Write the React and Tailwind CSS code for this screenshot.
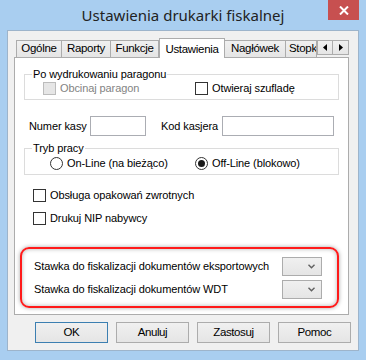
import React from "react";

const font = { fontFamily: '"Liberation Sans", Arial, sans-serif' };

function Check({ disabled, label }) {
  return (
    <div className="flex items-center">
      <div
        className={
          "w-[13px] h-[13px] border " +
          (disabled ? "border-[#bcbcbc] bg-[#e6e6e6]" : "border-[#333333] bg-white")
        }
      />
      <span className={"ml-[4px] " + (disabled ? "text-[#838383]" : "text-black")}>{label}</span>
    </div>
  );
}

function Radio({ checked, label }) {
  return (
    <div className="flex items-center">
      <div className="w-[13px] h-[13px] rounded-full border border-[#333333] bg-white flex items-center justify-center">
        {checked && <div className="w-[7px] h-[7px] rounded-full bg-[#1a1a1a]" />}
      </div>
      <span className="ml-[4px]">{label}</span>
    </div>
  );
}

function Combo() {
  return (
    <div className="w-[40px] h-[19px] border border-[#acacac] bg-gradient-to-b from-[#f0f0f0] to-[#e5e5e5] flex items-center justify-end pr-[6px]">
      <svg width="7" height="5" viewBox="0 0 7 5">
        <path d="M0.5 0.8 L3.5 3.8 L6.5 0.8" fill="none" stroke="#606060" strokeWidth="1.4" />
      </svg>
    </div>
  );
}

function Btn({ children, def }) {
  return (
    <div
      className={
        "w-[73px] h-[21px] border flex items-center justify-center text-[11.5px] tracking-[-0.4px] text-black bg-gradient-to-b from-[#f0f0f0] to-[#e5e5e5] " +
        (def ? "border-[#3c7fb1]" : "border-[#acacac]")
      }
    >
      {children}
    </div>
  );
}

function Tab({ label, w, selected }) {
  if (selected) {
    return (
      <div
        className={"h-[20px] mb-[-1px] relative z-10 bg-white border border-b-0 border-[#acacac] flex items-start justify-center pt-[2px] text-[11.5px] tracking-[-0.3px]"}
        style={{ width: w }}
      >
        {label}
      </div>
    );
  }
  return (
    <div
      className="h-[17px] border border-b-0 border-[#acacac] -ml-px first:ml-0 bg-gradient-to-b from-[#f0f0f0] to-[#e5e5e5] flex items-center justify-center text-[11.5px] tracking-[-0.3px] overflow-hidden whitespace-nowrap"
      style={{ width: w }}
    >
      {label}
    </div>
  );
}

export default function App() {
  return (
    <div className="w-[366px] h-[360px] bg-[#a9cef0] flex flex-col text-[11px] tracking-[-0.1px] text-black" style={font}>
      <div className="h-[30px] relative flex items-center justify-center">
        <span className="text-[15px] tracking-normal text-[#222222] mt-[1px]" style={{ fontFamily: '"Noto Sans", "Open Sans", sans-serif' }}>
          Ustawienia drukarki fiskalnej
        </span>
        <div className="absolute top-0 right-[7px] w-[31px] h-[20px] bg-[#c75050] flex items-center justify-center">
          <svg width="10" height="9" viewBox="0 0 10 9">
            <path d="M1 0.5 L9 8.5 M9 0.5 L1 8.5" stroke="white" strokeWidth="2" />
          </svg>
        </div>
      </div>
      <div className="ml-[7px] w-[352px] h-[321px] border border-[#9db4cb] bg-[#f0f0f0] flex flex-col">
        <div className="ml-[6px] mt-[7px] w-[335px] flex items-end pl-[2px] h-[19px]">
          <Tab label="Ogólne" w={46} />
          <Tab label="Raporty" w={50} />
          <Tab label="Funkcje" w={49} />
          <Tab label="Ustawienia" w={66} selected />
          <Tab label="Nagłówek" w={62} />
          <div className="h-[17px] w-[32px] -ml-px border border-b-0 border-[#acacac] bg-gradient-to-b from-[#f0f0f0] to-[#e5e5e5] flex items-center pl-[3px] text-[11.5px] tracking-[-0.3px] overflow-hidden whitespace-nowrap">
            Stopka
          </div>
          <div className="flex self-start mt-[2px] ml-0">
            <div className="w-[16px] h-[15px] border border-[#acacac] bg-gradient-to-b from-[#f0f0f0] to-[#e5e5e5] flex items-center justify-center">
              <svg width="4" height="7" viewBox="0 0 4 7"><path d="M4 0 L0 3.5 L4 7 Z" fill="#000" /></svg>
            </div>
            <div className="w-[16px] h-[15px] border border-l-0 border-[#acacac] bg-gradient-to-b from-[#f0f0f0] to-[#e5e5e5] flex items-center justify-center">
              <svg width="4" height="7" viewBox="0 0 4 7"><path d="M0 0 L4 3.5 L0 7 Z" fill="#000" /></svg>
            </div>
          </div>
        </div>
        <div className="ml-[6px] w-[335px] h-[258px] border border-[#acacac] bg-white flex flex-col">
          <fieldset className="mx-[9px] mt-[10px] border border-[#dcdcdc] pb-[4px] pt-[1px]">
            <legend className="ml-[7px] px-[1px] leading-[13px]">Po wydrukowaniu paragonu</legend>
            <div className="flex pl-[18px] leading-[13px]">
              <div className="w-[152px]">
                <Check disabled label="Obcinaj paragon" />
              </div>
              <Check label="Otwieraj szufladę" />
            </div>
          </fieldset>
          <div className="flex items-center mt-[16px] pl-[14px] h-[20px]">
            <span className="w-[61px]">Numer kasy</span>
            <div className="w-[56px] h-[20px] border border-[#abadb3] bg-white" />
            <span className="ml-[15px] w-[61px]">Kod kasjera</span>
            <div className="w-[112px] h-[20px] border border-[#abadb3] bg-white" />
          </div>
          <fieldset className="mx-[9px] mt-[6px] border border-[#dcdcdc] pb-[4px] pt-[2px]">
            <legend className="ml-[7px] px-[1px] leading-[13px]">Tryb pracy</legend>
            <div className="flex pl-[25px] leading-[13px]">
              <div className="w-[145px]">
                <Radio label="On-Line (na bieżąco)" />
              </div>
              <Radio checked label="Off-Line (blokowo)" />
            </div>
          </fieldset>
          <div className="pl-[18px] mt-[14px] flex flex-col gap-[10px] leading-[13px]">
            <Check label="Obsługa opakowań zwrotnych" />
            <Check label="Drukuj NIP nabywcy" />
          </div>
          <div className="ml-[5px] mr-[9px] mt-[22px] border-2 border-[#ff1a1a] rounded-[9px] shadow-[0_0_4px_rgba(0,0,0,0.35),inset_0_0_4px_rgba(0,0,0,0.3)] pt-[8px] pb-[7px] pl-[12px] pr-[15px] flex flex-col gap-[4px]">
            <div className="flex items-center justify-between">
              <span>Stawka do fiskalizacji dokumentów eksportowych</span>
              <Combo />
            </div>
            <div className="flex items-center justify-between">
              <span>Stawka do fiskalizacji dokumentów WDT</span>
              <Combo />
            </div>
          </div>
        </div>
        <div className="flex gap-[8px] ml-[27px] mt-[7px]">
          <Btn def>OK</Btn>
          <Btn>Anuluj</Btn>
          <Btn>Zastosuj</Btn>
          <Btn>Pomoc</Btn>
        </div>
      </div>
    </div>
  );
}
